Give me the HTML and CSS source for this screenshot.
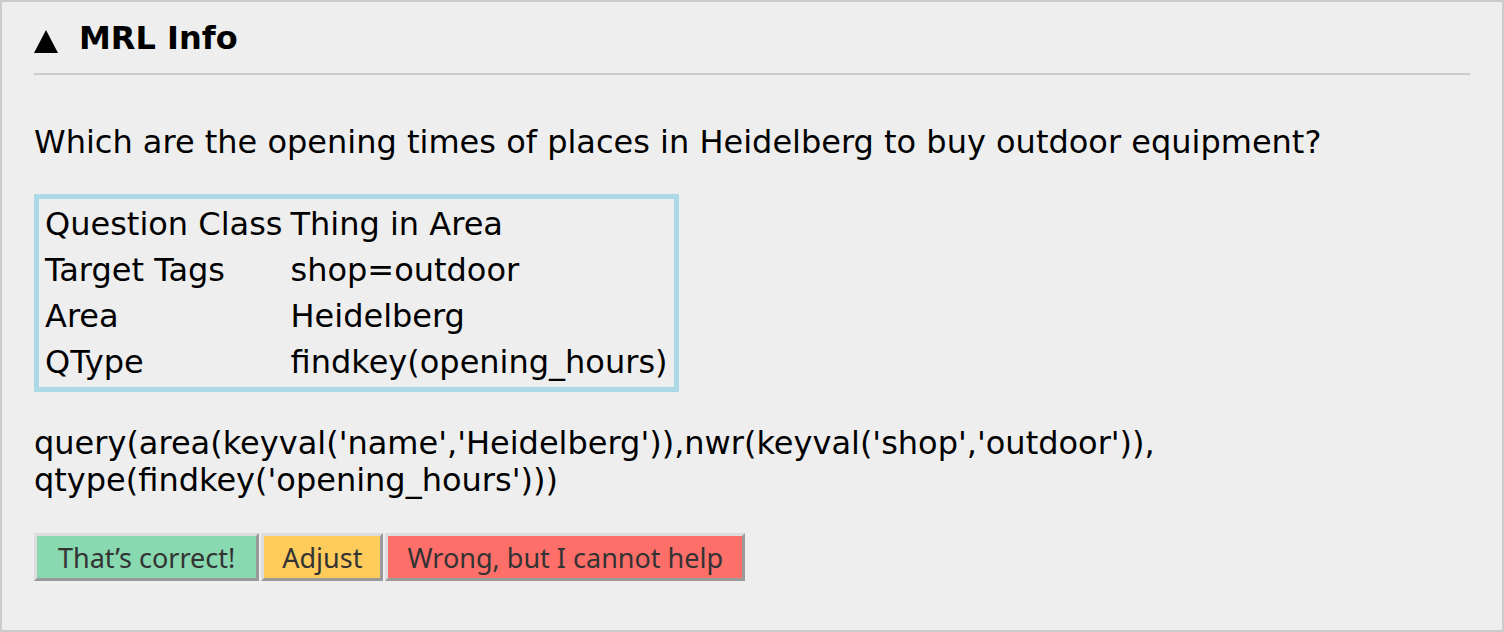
FILE: index.html
```html
<!DOCTYPE html>
<html>
<head>
<meta charset="utf-8">
<link rel="stylesheet" href="styles.css">
</head>
<body>
<div class="panel">
  <div class="header">
    <svg class="tri" width="24" height="23" viewBox="0 0 24 23"><polygon points="12,0 24,23 0,23" fill="#000"/></svg>
    <span class="title">MRL Info</span>
  </div>
  <hr class="rule">
  <p class="question">Which are the opening times of places in Heidelberg to buy outdoor equipment?</p>
  <table class="info">
    <tr><td>Question Class</td><td>Thing in Area</td></tr>
    <tr><td>Target Tags</td><td>shop=outdoor</td></tr>
    <tr><td>Area</td><td>Heidelberg</td></tr>
    <tr><td>QType</td><td>findkey(opening_hours)</td></tr>
  </table>
  <p class="query">query(area(keyval('name','Heidelberg')),nwr(keyval('shop','outdoor')),<wbr>qtype(findkey('opening_hours')))</p>
  <div class="actions">
    <button class="btn btn-ok">That’s correct!</button>
    <button class="btn btn-adjust">Adjust</button>
    <button class="btn btn-wrong">Wrong, but I cannot help</button>
  </div>
</div>
</body>
</html>
```
FILE: styles.css
```css
html, body {
  margin: 0;
  padding: 0;
}
body {
  font-family: "DejaVu Sans", sans-serif;
  font-size: 32px;
  line-height: 38px;
  color: #000;
}
.panel {
  box-sizing: border-box;
  height: 632px;
  border: 2px solid #ccc;
  background: #eee;
  padding: 17px 32px 0 32px;
}
.header {
  display: flex;
  align-items: center;
  gap: 21px;
  height: 38px;
}
.tri {
  align-self: flex-end;
  margin-bottom: 4px;
  flex: none;
}
.title {
  font-weight: bold;
}
.rule {
  border: 0;
  border-top: 2px solid #ccc;
  height: 0;
  margin: 16px 0 0 0;
}
.question {
  margin: 48px 0 0 0;
}
.info {
  margin-top: 33px;
  border: 5px solid #add8e6;
  border-spacing: 4px;
}
.info td {
  padding: 2px;
  line-height: 38px;
  white-space: nowrap;
}
.query {
  margin: 33px 0 0 0;
  line-height: 37px;
}
.actions {
  display: flex;
  gap: 2px;
  margin-top: 34px;
}
.btn {
  font-family: "Noto Sans", sans-serif;
  font-size: 27px;
  color: #333;
  height: 48px;
  padding: 0 18px;
  border: 3px solid;
  border-color: #ddd #999 #999 #ddd;
}
.btn-ok { background: #88d8b0; padding: 0 21px; }
.btn-adjust { background: #ffcc5c; }
.btn-wrong { background: #ff6f69; padding: 0 19px; }
```
